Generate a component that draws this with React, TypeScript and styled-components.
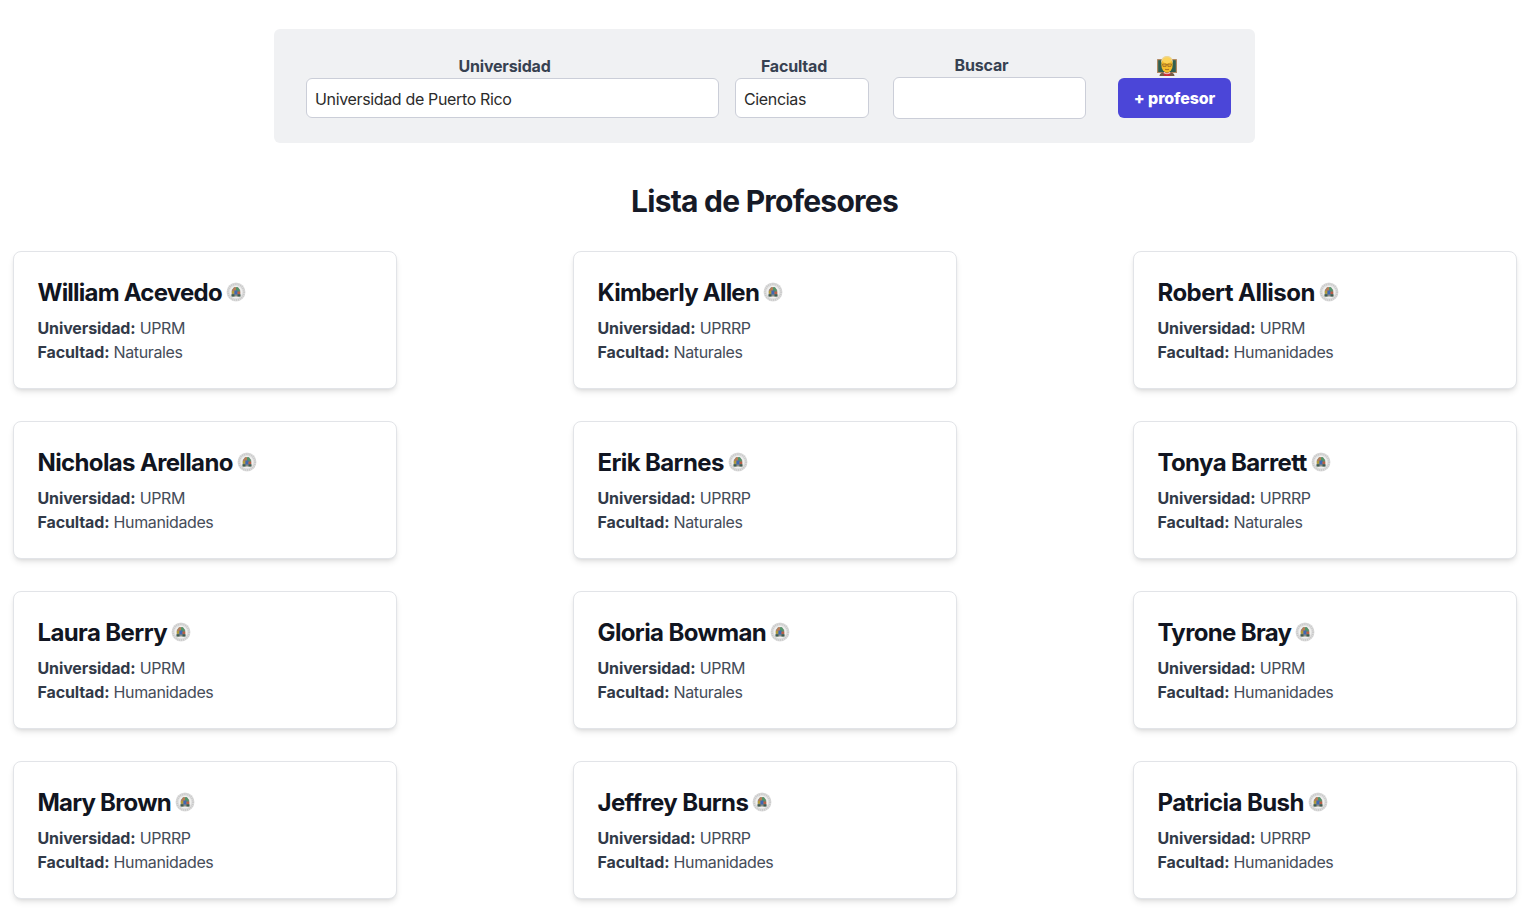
import React from 'react';
import styled, { createGlobalStyle } from 'styled-components';

const GlobalStyle = createGlobalStyle`
  *, *::before, *::after { box-sizing: border-box; }
  html, body { margin: 0; height: 100%; }
  body {
    overflow: hidden;
    background: #fff;
    color: #374151;
    font: 400 16px/24px Inter, 'Liberation Sans', sans-serif;
    letter-spacing: -0.3px;
  }
  h1, h2, p { margin: 0; }
`;

const Page = styled.main`
  height: 911px;
  overflow: hidden;
  padding: 29px 13px 0;
`;

const FilterBar = styled.form`
  display: flex;
  align-items: center;
  width: 981px;
  height: 114px;
  margin: 0 0 0 261px;
  padding: 0 24px 0 32px;
  border-radius: 6px;
  background: #f0f1f3;
`;

const Field = styled.label<{ $width: number; $gap: number }>`
  display: flex;
  flex-direction: column;
  width: ${(p) => p.$width}px;
  margin-right: ${(p) => p.$gap}px;
`;

const FieldLabel = styled.span`
  height: 24px;
  padding-right: 16px;
  color: #374151;
  font-weight: 700;
  letter-spacing: -0.18px;
  text-align: center;
`;

const Input = styled.input<{ $height?: number }>`
  width: 100%;
  height: ${(p) => p.$height ?? 40}px;
  padding: 2px 8px 0;
  border: 1px solid #cbced8;
  border-radius: 6px;
  outline: none;
  background: #fff;
  color: #2b2b2b;
  font: inherit;
  letter-spacing: -0.35px;
`;

const AddGroup = styled.div`
  display: flex;
  flex-direction: column;
  width: 113px;
`;

const EmojiSlot = styled.span`
  display: flex;
  justify-content: center;
  height: 24px;
  padding: 2px 15px 0 0;
`;

const AddButton = styled.button`
  height: 40px;
  padding: 0;
  border: 0;
  border-radius: 6px;
  background: #4b46d8;
  color: #fff;
  font: inherit;
  font-weight: 800;
  letter-spacing: -0.12px;
`;

const Title = styled.h1`
  margin: 40px 0 32px;
  padding-right: 1px;
  color: #161a27;
  font-size: 30px;
  line-height: 36px;
  font-weight: 700;
  letter-spacing: -0.76px;
  text-align: center;
`;

const Grid = styled.section`
  display: grid;
  grid-template-columns: repeat(3, 384px);
  justify-content: space-between;
  row-gap: 32px;
`;

const Card = styled.article`
  height: 138px;
  padding: 24px 24px 24px 23.5px;
  border: 1px solid #e2e4e8;
  border-radius: 8px;
  background: #fff;
  box-shadow: 0 4px 6px -1px rgba(0, 0, 0, 0.1), 0 2px 4px -2px rgba(0, 0, 0, 0.1);
`;

const NameRow = styled.div`
  display: flex;
  align-items: center;
  gap: 4px;
  height: 32px;
  margin-bottom: 8px;
`;

const Name = styled.h2<{ $spacing: number }>`
  padding-top: 2px;
  color: #111521;
  font-size: 24px;
  line-height: 32px;
  font-weight: 700;
  letter-spacing: ${(p) => p.$spacing}px;
  white-space: nowrap;
`;

const Detail = styled.p`
  color: #454c59;
  letter-spacing: -0.38px;

  strong {
    color: #323a48;
    font-weight: 700;
    letter-spacing: -0.12px;
  }
`;

const SealIcon = styled.svg`
  display: block;
  width: 20px;
  height: 20px;
`;

const TeacherIcon = () => (
  <svg width="20" height="20" viewBox="0 0 20 20" aria-hidden="true">
    <rect x="0" y="3" width="20" height="14" rx="0.6" fill="#b08a62" />
    <rect x="1.2" y="4.2" width="17.6" height="11.8" fill="#2f5f50" />
    <path d="M2.500 20c.3-3 2.500-4 7.500-4s7.200 1 7.500 4z" fill="#765c43" />
    <path d="M6.600 16.500h6.800L13 20H7z" fill="#c92d38" />
    <path d="M7 15.800l3 1.700 3-1.700.5 1.500-3.500 1-3.500-1z" fill="#efd8cb" />
    <ellipse cx="10" cy="8.500" rx="5.700" ry="8.200" fill="#f5bd2a" />
    <path d="M4.300 8C3.500 3 6 .1 10 .1S16.500 3 15.700 8C15 5 13.500 2.800 10 2.800S5 5 4.300 8z" fill="#ecd798" />
    <ellipse cx="10" cy="4.300" rx="4.200" ry="3" fill="#fcd358" />
    <path d="M5.500 8h3.600v2.400H6zM10.900 8h3.600l-.5 2.400h-3.100zM9.100 8.700h1.800" fill="#e9b02a" stroke="#906226" strokeWidth=".7" />
    <path d="M8 13.300q2 .8 4 0" fill="none" stroke="#a06a20" strokeWidth=".9" />
  </svg>
);

const Seal = () => (
  <SealIcon viewBox="0 0 20 20" aria-hidden="true">
    <circle cx="10" cy="10" r="9.500" fill="#dedede" />
    <circle cx="10" cy="10" r="8" fill="none" stroke="#c8c8c8" strokeWidth="1.800" strokeDasharray="1 .9" />
    <circle cx="10" cy="10" r="6.300" fill="#f0f0ef" />
    <path d="M5.800 14.400V8L8 5.300h4L14.200 8v6.400z" fill="#8b8e88" />
    <path d="M6.300 8L8.300 5.200H10V9H6.300z" fill="#b57c55" />
    <path d="M10 5.200h1.800L13.700 8v2H10z" fill="#519368" />
    <path d="M5.800 9h2.900v2.700H5.800z" fill="#b29b38" />
    <path d="M8.400 8.500h3.200v4H8.400z" fill="#4068b4" />
    <path d="M11.500 9.500h2.700V12h-2.700z" fill="#b95f46" />
    <path d="M5.500 12.300h3v2.200h-3zM11.500 12.300h3v2.200h-3z" fill="#405c50" />
  </SealIcon>
);

const professors = [
  { name: 'William Acevedo', university: 'UPRM', faculty: 'Naturales', spacing: -0.77 },
  { name: 'Kimberly Allen', university: 'UPRRP', faculty: 'Naturales', spacing: -0.78 },
  { name: 'Robert Allison', university: 'UPRM', faculty: 'Humanidades', spacing: -0.54 },
  { name: 'Nicholas Arellano', university: 'UPRM', faculty: 'Humanidades', spacing: -0.64 },
  { name: 'Erik Barnes', university: 'UPRRP', faculty: 'Naturales', spacing: -0.62 },
  { name: 'Tonya Barrett', university: 'UPRRP', faculty: 'Naturales', spacing: -0.62 },
  { name: 'Laura Berry', university: 'UPRM', faculty: 'Humanidades', spacing: -0.61 },
  { name: 'Gloria Bowman', university: 'UPRM', faculty: 'Naturales', spacing: -0.63 },
  { name: 'Tyrone Bray', university: 'UPRM', faculty: 'Humanidades', spacing: -0.66 },
  { name: 'Mary Brown', university: 'UPRRP', faculty: 'Humanidades', spacing: -0.8 },
  { name: 'Jeffrey Burns', university: 'UPRRP', faculty: 'Humanidades', spacing: -0.62 },
  { name: 'Patricia Bush', university: 'UPRRP', faculty: 'Humanidades', spacing: -0.58 },
];

export default function App() {
  return (
    <>
      <GlobalStyle />
      <Page>
        <FilterBar>
          <Field $width={413} $gap={16}>
            <FieldLabel>Universidad</FieldLabel>
            <Input defaultValue="Universidad de Puerto Rico" />
          </Field>
          <Field $width={134} $gap={24}>
            <FieldLabel>Facultad</FieldLabel>
            <Input defaultValue="Ciencias" />
          </Field>
          <Field $width={193} $gap={32}>
            <FieldLabel>Buscar</FieldLabel>
            <Input $height={42} />
          </Field>
          <AddGroup>
            <EmojiSlot><TeacherIcon /></EmojiSlot>
            <AddButton type="button">+ profesor</AddButton>
          </AddGroup>
        </FilterBar>
        <Title>Lista de Profesores</Title>
        <Grid>
          {professors.map((p) => (
            <Card key={p.name}>
              <NameRow>
                <Name $spacing={p.spacing}>{p.name}</Name>
                <Seal />
              </NameRow>
              <Detail><strong>Universidad:</strong> {p.university}</Detail>
              <Detail><strong>Facultad:</strong> {p.faculty}</Detail>
            </Card>
          ))}
        </Grid>
      </Page>
    </>
  );
}
